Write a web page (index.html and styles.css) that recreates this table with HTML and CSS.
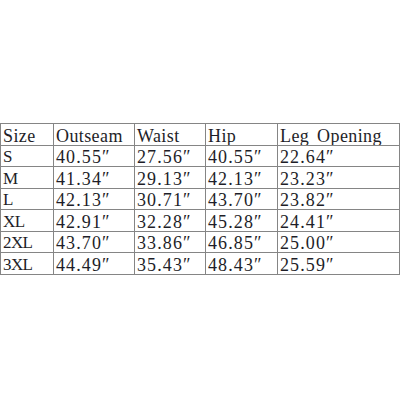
FILE: index.html
```html
<!DOCTYPE html>
<html>
<head>
<meta charset="utf-8">
<link rel="stylesheet" href="styles.css">
</head>
<body>
<table class="chart">
  <colgroup>
    <col class="c1"><col class="c2"><col class="c3"><col class="c4"><col class="c5">
  </colgroup>
  <tr class="head"><td>Size</td><td>Outseam</td><td>Waist</td><td>Hip</td><td>Leg Opening</td></tr>
  <tr><td class="sz">S</td><td>40.55″</td><td>27.56″</td><td>40.55″</td><td>22.64″</td></tr>
  <tr><td class="sz">M</td><td>41.34″</td><td>29.13″</td><td>42.13″</td><td>23.23″</td></tr>
  <tr><td class="sz">L</td><td>42.13″</td><td>30.71″</td><td>43.70″</td><td>23.82″</td></tr>
  <tr><td class="sz">XL</td><td>42.91″</td><td>32.28″</td><td>45.28″</td><td>24.41″</td></tr>
  <tr><td class="sz">2XL</td><td>43.70″</td><td>33.86″</td><td>46.85″</td><td>25.00″</td></tr>
  <tr><td class="sz">3XL</td><td>44.49″</td><td>35.43″</td><td>48.43″</td><td>25.59″</td></tr>
</table>
</body>
</html>
```
FILE: styles.css
```css
html, body {
  margin: 0;
  padding: 0;
  background: #ffffff;
}
body {
  padding-top: 123px;
}
.chart {
  border-collapse: collapse;
  table-layout: fixed;
  width: 399px;
  color: #1e1e28;
  font-family: "Liberation Serif", "DejaVu Serif", serif;
  font-size: 18px;
  letter-spacing: 1.1px;
}
.c1 { width: 53px; }
.c2 { width: 81px; }
.c3 { width: 71px; }
.c4 { width: 72px; }
.c5 { width: 122px; }
.chart tr {
  height: 21.57px;
}
.chart td {
  border: 1px solid #858585;
  padding: 0 0 0 2px;
  line-height: 18px;
  vertical-align: bottom;
  white-space: nowrap;
  overflow: hidden;
}
.chart .head td {
  letter-spacing: 0.4px;
  word-spacing: 3px;
}
.chart td.sz {
  font-size: 17px;
  letter-spacing: -0.6px;
}
```
